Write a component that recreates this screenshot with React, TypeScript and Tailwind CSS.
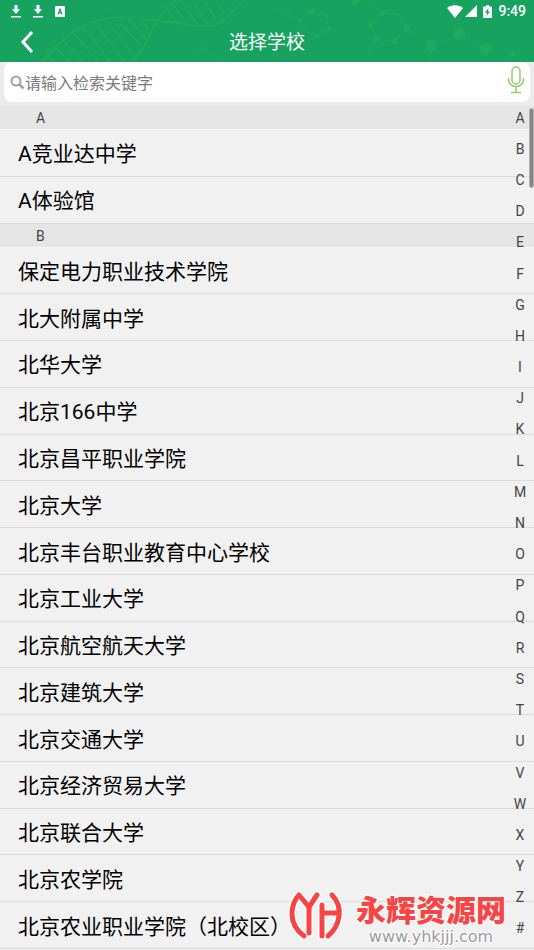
import React from "react";

const SECTIONS = [
  { letter: "A", schools: ["A竞业达中学", "A体验馆"] },
  {
    letter: "B",
    schools: [
      "保定电力职业技术学院",
      "北大附属中学",
      "北华大学",
      "北京166中学",
      "北京昌平职业学院",
      "北京大学",
      "北京丰台职业教育中心学校",
      "北京工业大学",
      "北京航空航天大学",
      "北京建筑大学",
      "北京交通大学",
      "北京经济贸易大学",
      "北京联合大学",
      "北京农学院",
      "北京农业职业学院（北校区）",
    ],
  },
];

const INDEX = "ABCDEFGHIJKLMNOPQRSTUVWXYZ#".split("");

function HeaderPattern() {
  return (
    <svg
      aria-hidden="true"
      className="absolute inset-0 h-full w-full"
      viewBox="0 0 534 62"
      preserveAspectRatio="xMidYMid slice"
      fill="none"
      stroke="#27af5a"
    >
      <g strokeWidth="2" opacity="0.6">
        <path d="M42 62C62 38 82 20 112 18S140 19 160 21S186 25 205 26S226 14 246 0" />
        <path d="M132 62C146 48 148 36 158 20C162 12 168 6 176 0" />
      </g>
      <g strokeWidth="2" opacity="0.55">
        <path d="M46 55l7 7M54 46l16 16M62 39l21 23M72 31l26 31M82 25l28 37M93 21l32 41M105 19l30 38M117 18l24 29M129 19l17 20M141 20l8 10" />
        <path d="M166 9l12 15M172 4l16 21M180 0l18 25M192 0l16 25M204 0l12 20M216 0l8 13" />
      </g>
      <g opacity="0.25" strokeWidth="1">
        <path d="M20 46C50 16 88 4 130 12S176 34 222 62M186 62l16-14l20 10l30-26l18 6M202 48l-8-14" />
        <path d="M264 4l10 9l14-2l8-11M270 62l8-12l18 4" />
      </g>
      <g opacity="0.5" strokeWidth="1">
        <path d="M300 20l12-9l14 5l3 13l-12 8l-12-6zM300 20l-18-8l-12-8M355 0l16 2l11 11l17 2l8 14l-12 12l-18-2l-7-14l12-12M377 39l-7 16l-10 2M407 29l24 17l29-12l26 15M431 46v16M486 49v13M512 54l22-6" />
      </g>
      <g fill="#20ae62" stroke="none" opacity="0.7">
        <circle cx="431" cy="46" r="6" />
        <circle cx="459" cy="34" r="6" />
        <circle cx="486" cy="49" r="6" />
        <circle cx="202" cy="49" r="4" opacity="0.5" />
        <circle cx="312" cy="11" r="3" />
        <circle cx="326" cy="16" r="2" />
        <circle cx="329" cy="29" r="2" />
        <circle cx="300" cy="20" r="2" />
        <circle cx="317" cy="37" r="2" />
        <circle cx="355" cy="2" r="3" />
        <circle cx="382" cy="13" r="3" />
        <circle cx="399" cy="15" r="2" />
        <circle cx="407" cy="29" r="3" />
        <circle cx="395" cy="41" r="3" />
        <circle cx="377" cy="39" r="3" />
        <circle cx="370" cy="25" r="3" />
        <circle cx="512" cy="54" r="3" />
      </g>
    </svg>
  );
}

function DownloadIcon() {
  return (
    <svg aria-hidden="true" width="10" height="14" viewBox="0 0 10 14" fill="#fff">
      <path d="M3.500 1h3v4H9L5 10L1 5h2.500zM0 12h10v1.500H0z" />
    </svg>
  );
}

function StatusBar() {
  return (
    <div className="flex h-[22px] items-center justify-between pl-[11px] pr-2">
      <div className="flex items-center gap-3">
        <DownloadIcon />
        <DownloadIcon />
        <svg aria-hidden="true" width="10" height="11" viewBox="0 0 10 11">
          <rect width="10" height="11" rx="1" fill="#fff" />
          <path d="M3 8.500L5 3l2 5.500M3.700 6.800h2.600" fill="none" stroke="#17a25f" strokeWidth="1.200" />
        </svg>
      </div>
      <div className="flex items-center gap-[2px]">
        <svg aria-hidden="true" width="16" height="13" viewBox="0 0 16 13" fill="#fff">
          <path d="M8 13L0 3C4-.8 12-.8 16 3z" />
        </svg>
        <svg aria-hidden="true" width="12" height="12" viewBox="0 0 12 12" fill="#fff">
          <path d="M12 0v12H0z" />
        </svg>
        <svg aria-hidden="true" className="mx-1" width="9" height="13" viewBox="0 0 9 13">
          <path d="M3 0h3v1.500h3V13H0V1.500h3z" fill="#fff" />
          <path d="M5.500 3L2 7.500h2L3.500 11L7 6.500H5z" fill="#17a25f" />
        </svg>
        <span className="text-[14px] leading-[22px] font-medium">9:49</span>
      </div>
    </div>
  );
}

function Watermark() {
  return (
    <div className="pointer-events-none absolute right-7 bottom-1 flex items-end gap-[10px]">
      <svg
        aria-hidden="true"
        width="58"
        height="56"
        viewBox="0 0 58 56"
        fill="none"
        strokeLinecap="round"
        strokeLinejoin="round"
      >
        {["#ffffff", "#f74545"].map((c, i) => (
          <g key={c} stroke={c} strokeWidth={i ? 5 : 8}>
            <path d="M16 46C8 40 4 32 4 24C4 16 6 10 11 5L21 17L29 5" />
            <path d="M21 17V43M34 15V46M34 23H49" />
            <path d="M44 5C50 11 52 18 51 26C50 34 46 41 40 46" />
          </g>
        ))}
      </svg>
      <div className="flex flex-col items-center gap-px">
        <span className="text-[30px] leading-[32px] font-black text-[#f74545] [paint-order:stroke_fill] [-webkit-text-stroke:2px_#fff]">
          永辉资源网
        </span>
        <span className="font-['DejaVu_Sans',sans-serif] text-[16px] leading-[18px] text-[#9b9b9b] [paint-order:stroke_fill] [-webkit-text-stroke:2px_#fff]">
          www.yhkjjj.com
        </span>
      </div>
    </div>
  );
}

export default function App() {
  return (
    <div className="relative flex min-h-screen flex-col overflow-hidden bg-[#f1f1f1] font-[Roboto,'Noto_Sans_CJK_SC',sans-serif] text-black">
      <header className="relative bg-[#17a25f] text-white">
        <HeaderPattern />
        <div className="relative">
          <StatusBar />
          <div className="relative flex h-10 items-center justify-center">
            <button type="button" aria-label="返回" className="absolute left-5 flex h-10 w-8 items-center">
              <svg width="14" height="22" viewBox="0 0 14 22" fill="none" stroke="#fff" strokeWidth="3">
                <path d="M12 1L3 11l9 10" />
              </svg>
            </button>
            <h1 className="pt-[2px] text-[19px] leading-9">选择学校</h1>
          </div>
        </div>
      </header>

      <div className="bg-[#ebebeb] px-1 pb-1">
        <div className="flex h-10 items-center rounded-lg bg-white pr-[5px] pl-[6px]">
          <svg aria-hidden="true" width="15" height="15" viewBox="0 0 15 15" fill="none" stroke="#a0a0a0" strokeWidth="2">
            <circle cx="6" cy="6" r="4.500" />
            <path d="M9.500 9.500l4 4" strokeWidth="2.500" />
          </svg>
          <input
            type="text"
            aria-label="检索关键字"
            placeholder="请输入检索关键字"
            className="min-w-0 flex-1 bg-transparent pt-[3px] text-base outline-none placeholder:text-[#7b7b7b]"
          />
          <button type="button" aria-label="语音输入" className="pb-1">
            <svg width="18" height="28" viewBox="0 0 18 28" fill="none" stroke="#8fd16a" strokeWidth="1.500">
              <rect x="5" y="1" width="8" height="17" rx="4" />
              <path d="M1.500 12v2a7.500 6.500 0 0 0 15 0v-2M9 20.500V26M4 26.500h10" />
            </svg>
          </button>
        </div>
      </div>

      <main className="relative flex flex-1 flex-col pb-px">
        {SECTIONS.map((s) => (
          <React.Fragment key={s.letter}>
            <h2
              id={s.letter}
              className="h-6 border-b border-[#f8f8f8] bg-[#e5e5e5] pl-9 text-[14px] leading-[25px] text-[#444]"
            >
              {s.letter}
            </h2>
            {s.schools.map((name) => (
              <button
                type="button"
                key={name}
                className="min-h-11 flex-1 border-b border-[#dcdcdc] pt-[3px] pl-[18px] text-left text-[21px] leading-7 last-of-type:border-[#dcdcdc]"
              >
                {name}
              </button>
            ))}
          </React.Fragment>
        ))}
        <div className="absolute top-[2px] right-0 h-20 w-[5px] rounded-full border border-[#b0b0b0] bg-[#858585]" />
        <nav aria-label="字母索引" className="absolute -top-1 right-[5px] bottom-[6px] flex w-[18px] flex-col">
          {INDEX.map((l) => (
            <a key={l} href={"#" + l} className="flex flex-1 items-center justify-center text-[14px] leading-4 text-[#444]">
              {l}
            </a>
          ))}
        </nav>
      </main>
      <Watermark />
    </div>
  );
}
